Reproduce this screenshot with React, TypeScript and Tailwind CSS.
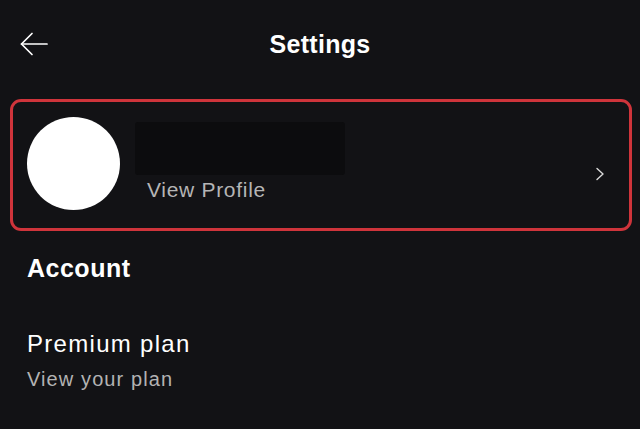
import React from 'react';

const BackArrow = () => (
  <svg width="28" height="24" viewBox="0 0 28 24" fill="none" stroke="white" strokeWidth="1.7" strokeLinecap="round" strokeLinejoin="round">
    <path d="M27 12H1.5" />
    <path d="M12 1.5L1.5 12L12 22.5" />
  </svg>
);

const Chevron = () => (
  <svg width="10" height="14" viewBox="0 0 10 14" fill="none" stroke="#d9d9d9" strokeWidth="1.4" strokeLinecap="round" strokeLinejoin="round">
    <path d="M2 1.5L8 7L2 12.5" />
  </svg>
);

export default function App() {
  return (
    <div className="w-full h-screen bg-[#121215] text-white overflow-hidden" style={{ fontFamily: '"Liberation Sans", Arial, sans-serif' }}>
      {/* Header */}
      <div className="h-[88px] flex items-center px-5">
        <div className="w-[28px] flex items-center">
          <BackArrow />
        </div>
        <h1 className="flex-1 text-center text-[25px] leading-none font-bold tracking-[0.3px]">Settings</h1>
        <div className="w-[28px]" />
      </div>

      {/* Profile card */}
      <div className="mt-[11px] ml-[10px] mr-[8px] h-[132px] border-[3px] border-[#cf343b] rounded-[11px] flex items-start pt-[15px] pl-[14px] pr-[24px]">
        <div className="w-[93px] h-[93px] rounded-full bg-white shrink-0" />
        <div className="ml-[27px] pt-[5px] flex flex-col">
          <div className="-ml-[12px] w-[210px] h-[53px] bg-[#0c0c0e] rounded-[3px]" />
          <span className="mt-[3px] text-[21px] leading-[24px] text-[#b5b5b5] tracking-[0.7px]">View Profile</span>
        </div>
        <div className="ml-auto self-center pt-[2px]">
          <Chevron />
        </div>
      </div>

      {/* Account */}
      <div className="pl-[27px] mt-[22px]">
        <h2 className="text-[25px] leading-[30px] font-bold tracking-[0.5px]">Account</h2>
        <div className="mt-[47px]">
          <div className="text-[24px] leading-[28px] tracking-[1.3px]">Premium plan</div>
          <div className="mt-[9px] text-[20px] leading-[24px] text-[#b3b3b3] tracking-[1.1px]">View your plan</div>
        </div>
      </div>
    </div>
  );
}
